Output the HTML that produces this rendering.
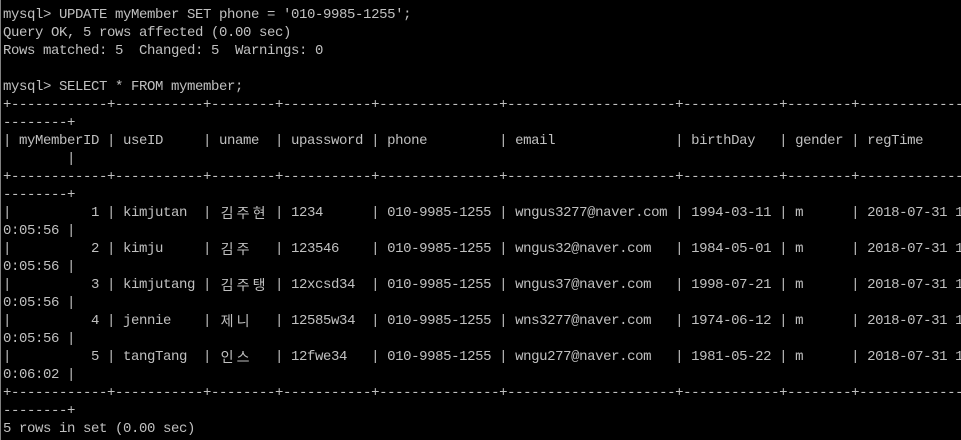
<!DOCTYPE html>
<html><head><meta charset="utf-8"><style>
html,body{margin:0;padding:0;background:#000;width:961px;height:440px;overflow:hidden}
body{border-left:1px solid #808080;box-sizing:border-box}
pre{margin:0;padding:6px 0 0 2px;font-family:"Liberation Mono","Noto Sans CJK KR",monospace;font-size:14px;letter-spacing:-0.4px;line-height:18px;color:#c0c0c0;white-space:pre}
.k{display:inline-block;width:16px;text-align:center;letter-spacing:0;font-family:"Noto Sans CJK KR","NanumGothic",sans-serif;font-size:14px;line-height:18px;vertical-align:top}
</style></head><body><pre>mysql&gt; UPDATE myMember SET phone = '010-9985-1255';
Query OK, 5 rows affected (0.00 sec)
Rows matched: 5  Changed: 5  Warnings: 0

mysql&gt; SELECT * FROM mymember;
+------------+-----------+--------+-----------+---------------+---------------------+------------+--------+-------------
--------+
| myMemberID | useID     | uname  | upassword | phone         | email               | birthDay   | gender | regTime
        |
+------------+-----------+--------+-----------+---------------+---------------------+------------+--------+-------------
--------+
|          1 | kimjutan  | <span class="k">김</span><span class="k">주</span><span class="k">현</span> | 1234      | 010-9985-1255 | wngus3277@naver.com | 1994-03-11 | m      | 2018-07-31 1
0:05:56 |
|          2 | kimju     | <span class="k">김</span><span class="k">주</span>   | 123546    | 010-9985-1255 | wngus32@naver.com   | 1984-05-01 | m      | 2018-07-31 1
0:05:56 |
|          3 | kimjutang | <span class="k">김</span><span class="k">주</span><span class="k">탱</span> | 12xcsd34  | 010-9985-1255 | wngus37@naver.com   | 1998-07-21 | m      | 2018-07-31 1
0:05:56 |
|          4 | jennie    | <span class="k">제</span><span class="k">니</span>   | 12585w34  | 010-9985-1255 | wns3277@naver.com   | 1974-06-12 | m      | 2018-07-31 1
0:05:56 |
|          5 | tangTang  | <span class="k">인</span><span class="k">스</span>   | 12fwe34   | 010-9985-1255 | wngu277@naver.com   | 1981-05-22 | m      | 2018-07-31 1
0:06:02 |
+------------+-----------+--------+-----------+---------------+---------------------+------------+--------+-------------
--------+
5 rows in set (0.00 sec)</pre></body></html>
